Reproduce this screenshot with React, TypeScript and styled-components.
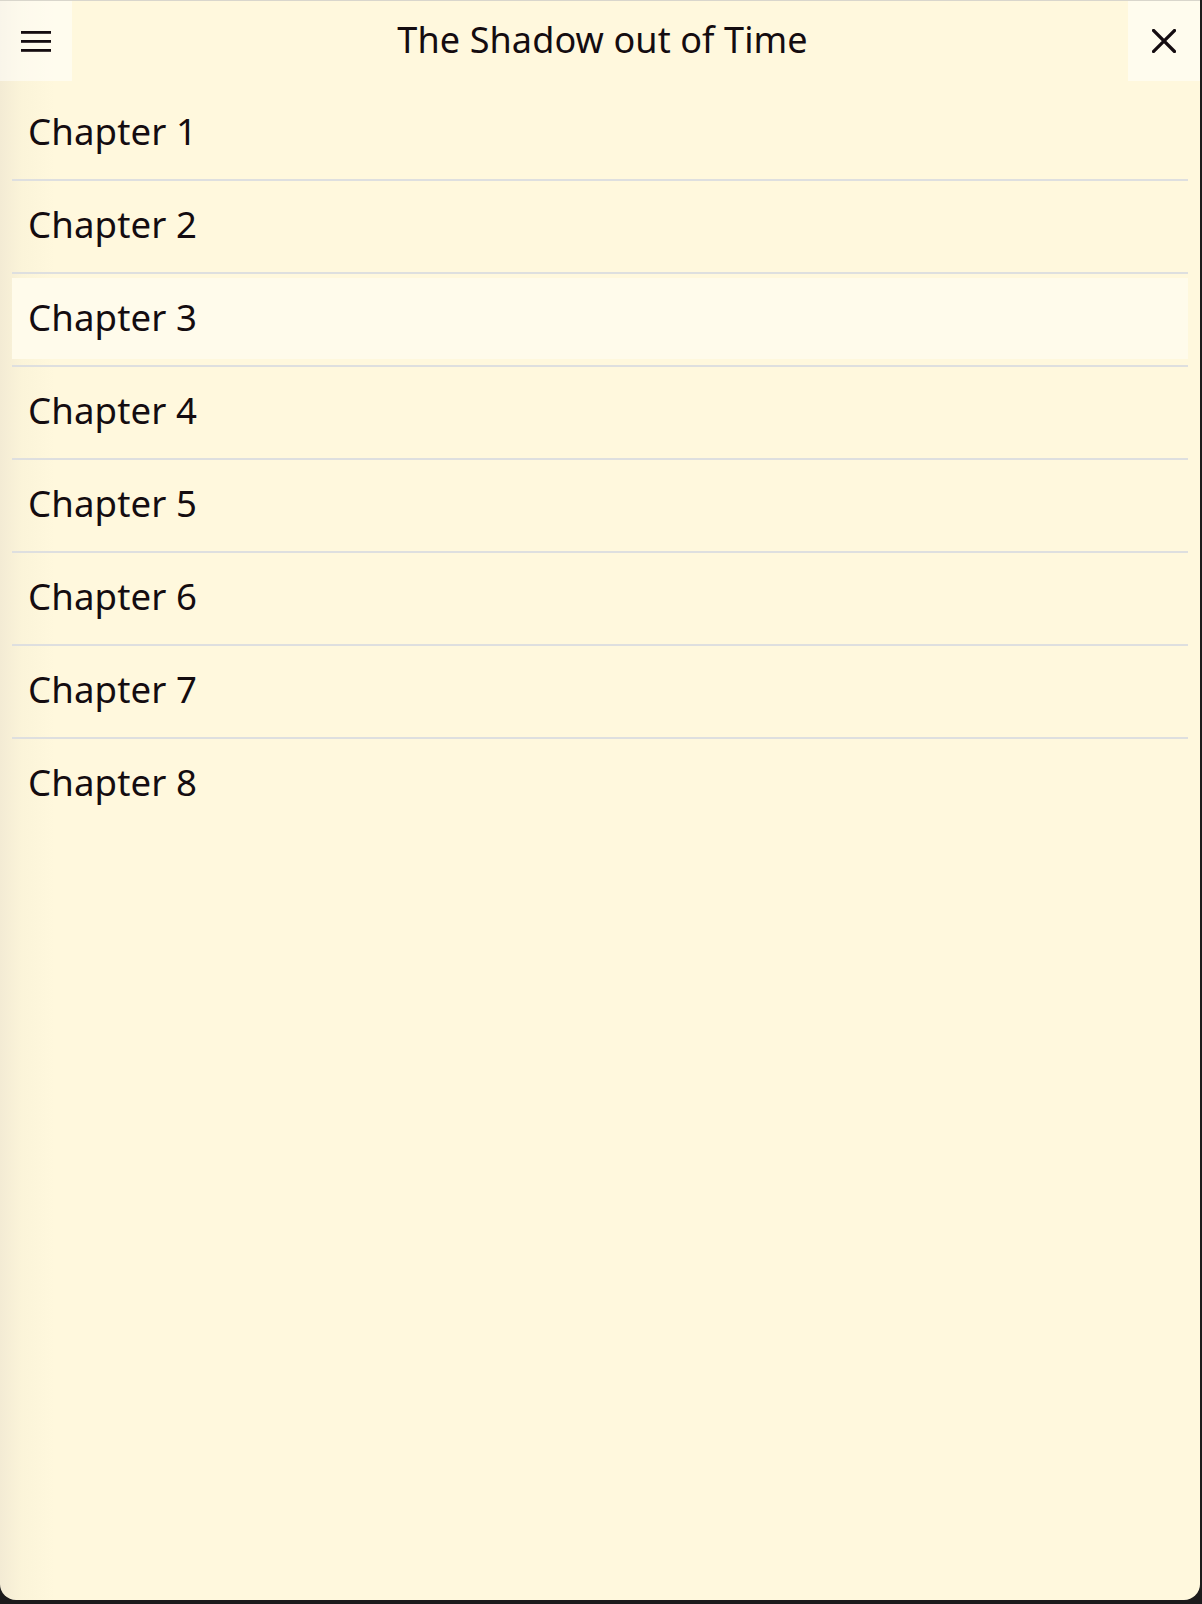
import React from 'react';
import styled, {createGlobalStyle} from "styled-components";

const chapters = ["Chapter 1", "Chapter 2", "Chapter 3", "Chapter 4", "Chapter 5", "Chapter 6", "Chapter 7", "Chapter 8"];

const GlobalStyle = createGlobalStyle`
  html, body {
    margin: 0;
    padding: 0;
    background: #1c1b1c;
  }

  body {
    font-family: "Noto Sans", "Open Sans", sans-serif;
    color: #140c10;
  }
`

export default function App() {
    return (
        <>
            <GlobalStyle/>
            <Panel>
                <Header>
                    <IconButton aria-label="menu">
                        <svg width="30" height="21" viewBox="0 0 30 21">
                            <rect x="0" y="0" width="30" height="2.8" fill="#140c10"/>
                            <rect x="0" y="9" width="30" height="2.8" fill="#140c10"/>
                            <rect x="0" y="18" width="30" height="2.8" fill="#140c10"/>
                        </svg>
                    </IconButton>
                    <Title>The Shadow out of Time</Title>
                    <IconButton aria-label="close">
                        <svg width="24" height="24" viewBox="0 0 24 24">
                            <path d="M1.5 1.5 L22.5 22.5 M22.5 1.5 L1.5 22.5" stroke="#140c10" strokeWidth="3.2"
                                  strokeLinecap="square"/>
                        </svg>
                    </IconButton>
                </Header>

                <ChapterList>
                    {chapters.map((name, i) => (
                        <ChapterItem key={name} last={i === chapters.length - 1}>
                            <ChapterLink active={i === 2}>{name}</ChapterLink>
                        </ChapterItem>
                    ))}
                </ChapterList>
            </Panel>
        </>
    );
}

const Panel = styled.div`
  box-sizing: border-box;
  width: 1200px;
  height: 1600px;
  background: linear-gradient(to right, #f3ebd4 0, #fbf4d9 22px, #fff8dd 55px, #fff8dd 100%);
  border-top: 1px solid #d9d6cc;
  border-radius: 0 0 16px 16px;
  overflow: hidden;
`

const Header = styled.header`
  display: grid;
  grid-template-columns: 72px 1fr 72px;
  align-items: center;
  height: 80px;
`

const IconButton = styled.button`
  display: flex;
  align-items: center;
  justify-content: center;
  height: 80px;
  padding: 0;
  border: none;
  background: rgba(255, 255, 255, 0.5);
  cursor: pointer;
`

const Title = styled.h1`
  margin: 0 0 3px;
  padding-left: 5px;
  text-align: center;
  font-size: 36px;
  font-weight: 400;
  letter-spacing: 0.1px;
`

const ChapterList = styled.ul`
  list-style: none;
  margin: 0 12px;
  padding: 7px 0 0;
`

const ChapterItem = styled.li<{ last?: boolean }>`
  padding: 4px 0 6px;
  border-bottom: ${p => p.last ? "none" : "2px solid #dedfdf"};
`

const ChapterLink = styled.a<{ active?: boolean }>`
  display: flex;
  align-items: center;
  height: 81px;
  padding: 0 0 2px 16px;
  box-sizing: border-box;
  font-size: 36.6px;
  line-height: 1;
  letter-spacing: 0.1px;
  background: ${p => p.active ? "#fffbeb" : "transparent"};
  cursor: pointer;
`
